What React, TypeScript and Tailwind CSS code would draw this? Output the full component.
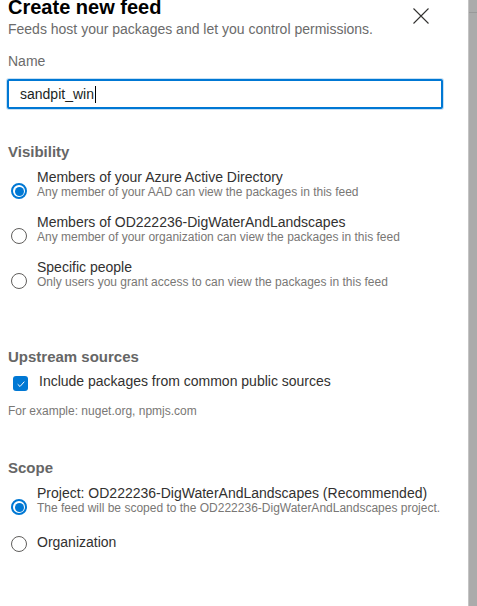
import React from "react";

type Choice = {
  label: string;
  desc?: string;
  checked?: boolean;
};

const visibility: Choice[] = [
  { label: "Members of your Azure Active Directory", desc: "Any member of your AAD can view the packages in this feed", checked: true },
  { label: "Members of OD222236-DigWaterAndLandscapes", desc: "Any member of your organization can view the packages in this feed" },
  { label: "Specific people", desc: "Only users you grant access to can view the packages in this feed" },
];

function Radio({ checked }: { checked?: boolean }) {
  if (checked) {
    return (
      <span className="flex size-4 shrink-0 items-center justify-center rounded-full border-2 border-[#0078d4] bg-white">
        <span className="size-[9px] rounded-full bg-[#0078d4]" />
      </span>
    );
  }
  return <span className="block size-4 shrink-0 rounded-full border border-[#605e5c] bg-white" />;
}

function ChoiceRow({ c, className }: { c: Choice; className?: string }) {
  return (
    <div className={`flex items-start pl-[3px] ${className ?? ""}`}>
      <div className={c.desc ? "mt-[14px]" : "mt-[2px]"}>
        <Radio checked={c.checked} />
      </div>
      <div className="ml-[10px]">
        <div className="text-[14px] leading-[16px] text-[#323130]">{c.label}</div>
        {c.desc && <div className="text-[12px] leading-[14px] text-[#797775]">{c.desc}</div>}
      </div>
    </div>
  );
}

function Heading({ children, className }: { children: React.ReactNode; className?: string }) {
  return <div className={`text-[15px] font-bold leading-[20px] text-[#666666] ${className ?? ""}`}>{children}</div>;
}

export default function App() {
  return (
    <div className="flex h-[606px] w-[477px] overflow-hidden bg-white" style={{ fontFamily: '"Liberation Sans", Arial, sans-serif' }}>
      <div className="relative flex-1 pl-2 pr-[25px]">
        <button className="absolute left-[413px] top-2 size-4 text-[#323130]" aria-label="Close">
          <svg viewBox="0 0 16 16" className="size-4" fill="none" stroke="currentColor" strokeWidth="1.1">
            <path d="M0.5 0.5 L15.5 15.5 M15.5 0.5 L0.5 15.5" />
          </svg>
        </button>

        <h1 className="mt-[-4px] text-[20px] font-bold leading-[23px] text-black">Create new feed</h1>
        <p className="text-[14px] leading-[20px] text-[#6b6b6b]">Feeds host your packages and let you control permissions.</p>

        <div className="mt-3 text-[14px] leading-[20px] text-[#6b6b6b]">Name</div>
        <div className="ml-[-1px] mt-2 flex h-[30px] w-[436px] items-center rounded-[2px] border-2 border-[#0078d4] pl-[11px] text-[14px] text-[#201f1e] shadow-[0_0_0_1px_#c7e0f4]">
          sandpit_win
          <span className="ml-px h-[17px] w-px bg-black" />
        </div>

        <Heading className="mt-[33px]">Visibility</Heading>
        <div className="mt-[7px] flex flex-col gap-[15px]">
          {visibility.map((c) => (
            <ChoiceRow key={c.label} c={c} />
          ))}
        </div>

        <Heading className="mt-[58px]">Upstream sources</Heading>
        <div className="mt-1 flex items-start pl-[5px]">
          <span className="mt-[5px] flex size-[15px] shrink-0 items-center justify-center rounded-[3px] bg-[#0078d4]">
            <svg viewBox="0 0 12 12" className="size-[10px]" fill="none" stroke="white" strokeWidth="1.2">
              <path d="M2 6.3 L4.8 9 L10 3.2" />
            </svg>
          </span>
          <span className="ml-[11px] text-[14px] leading-[20px] text-[#323130]">Include packages from common public sources</span>
        </div>
        <div className="mt-3 text-[12px] leading-[16px] text-[#797775]">For example: nuget.org, npmjs.com</div>

        <Heading className="mt-[39px]">Scope</Heading>
        <ChoiceRow
          className="mt-[7px]"
          c={{
            label: "Project: OD222236-DigWaterAndLandscapes (Recommended)",
            desc: "The feed will be scoped to the OD222236-DigWaterAndLandscapes project.",
            checked: true,
          }}
        />
        <ChoiceRow className="mt-[19px]" c={{ label: "Organization" }} />
      </div>

      <div className="w-[9px] shrink-0 border-l border-[#c4c4c4] bg-[#ababab]">
        <div className="mt-[12px] h-px bg-[#999999]" />
      </div>
    </div>
  );
}
